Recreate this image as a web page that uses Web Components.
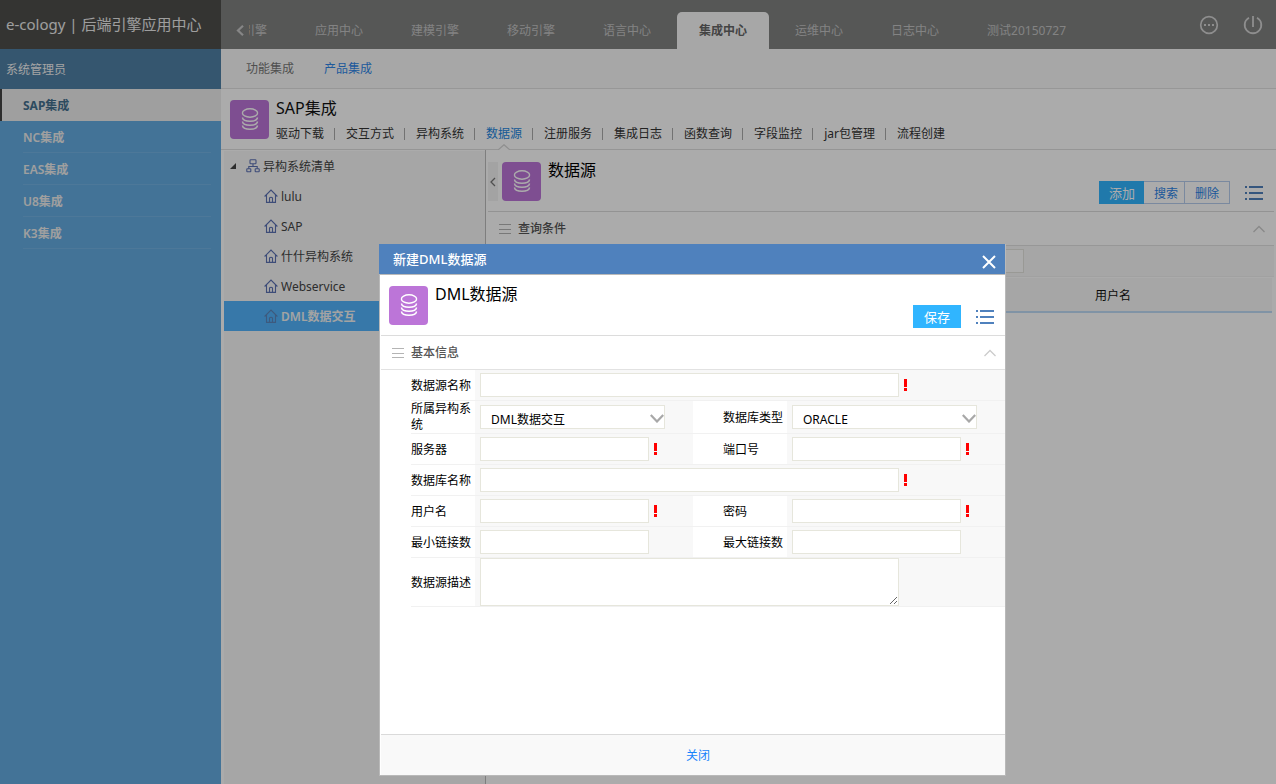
<!DOCTYPE html>
<html lang="zh-CN">
<head>
<meta charset="utf-8">
<title>e-cology | 后端引擎应用中心</title>
<style>
html,body{margin:0;height:100%}
body{font:12px/16px "Noto Sans","Noto Sans CJK SC",sans-serif;color:#222;background:#fff;overflow:hidden}
</style>
</head>
<body>
<engine-app></engine-app>
<script>
const ICONS={
  db:[39,39,'<rect width="39" height="39" rx="4" fill="#bc75d8"/><g fill="none" stroke="#fff" stroke-width="1.4"><ellipse cx="20" cy="13" rx="7.6" ry="4.2"/><path d="M12.4 17.5c1 5 14.200 5 15.200 0M12.400 21.500c1 5 14.200 5 15.200 0M12.400 25.500c1 5 14.200 5 15.200 0"/></g>'],
  list:[18,16,'<g fill="#4f81bd"><path d="M0 1h2v2H0zM4 1h14v2H4zM0 7h2v2H0zM4 7h14v2H4zM0 13h2v2H0zM4 13h14v2H4z"/></g>'],
  lines:[12,10,'<path d="M0 .5h12M0 5.500h12M0 9.500h12" stroke="#b4b4b4"/>'],
  up:[12,8,'<path d="M.5 7L6 1.500L11.500 7" fill="none" stroke="#ccc" stroke-width="1.300"/>'],
  back:[8,11,'<path d="M7 .8L2 5.500L7 10.200" fill="none" stroke="#c8c8c8" stroke-width="2.200"/>'],
  fold:[6,10,'<path d="M5 1L1 5L5 9" fill="none" stroke="#777" stroke-width="1.300"/>'],
  more:[20,20,'<circle cx="10" cy="10" r="8.300" fill="none" stroke="#d4d4d4" stroke-width="1.700"/><path d="M5 9h2v2H5zM9 9h2v2H9zM13 9h2v2h-2z" fill="#d4d4d4"/>'],
  power:[20,20,'<path d="M6 2.700a8.300 8.300 0 1 0 8 0M10 1v11" fill="none" stroke="#d4d4d4" stroke-width="1.800"/>'],
  house:[14,14,'<path d="M.6 7.500L7 1l6.400 6.500M2.500 6v7.400h9V6M5.500 13.400V9q1.500-1.500 3 0v4.400" fill="none" stroke="currentColor" stroke-width="1.100"/>'],
  org:[14,14,'<g fill="none" stroke="currentColor" stroke-width="1.100"><rect x="4" y=".8" width="6" height="4" rx=".8"/><rect x=".8" y="9.800" width="4" height="3" rx=".5"/><rect x="9.200" y="9.800" width="4" height="3" rx=".5"/><path d="M7 5v2.500M2.800 9.800V7.500h8.400v2.300"/></g>'],
  twist:[6,6,'<path d="M6 0v6H0z" fill="#444"/>'],
  close:[14,14,'<path d="M1 1l12 12M13 1L1 13" stroke="#fff" stroke-width="2"/>'],
  down:[14,9,'<path d="M.8 1L7 7.500L13.200 1" fill="none" stroke="#a8a8a8" stroke-width="2.200"/>'],
  need:[4,12,'<path d="M0 0h3v8H0zM0 9h3v3H0z" fill="#f00"/>'],
  peak:[12,6,'<path d="M0 6L6 .7L12 6" fill="#fff" stroke="#d6d6d6" stroke-width="1.200"/>']
};
class Base extends HTMLElement{
  connectedCallback(){
    if(this.shadowRoot)return;
    const t=document.createElement('template');
    t.innerHTML=`<style>*{box-sizing:border-box}button,a{font:inherit;color:inherit;text-decoration:none}button{padding:0;border:0;background:none;display:inline-flex;align-items:center;justify-content:center}h1,h2,h3{margin:0;font-weight:400}${this.css()}</style>${this.html()}`;
    this.attachShadow({mode:'open'}).append(t.content.cloneNode(true));
  }
  attr(n){return this.getAttribute(n)||''}
}
const def=(n,css,html)=>customElements.define(n,class extends Base{css(){return typeof css==='function'?css(this):css}html(){return typeof html==='function'?html(this):html}});

def('app-icon',':host{display:inline-flex;flex:none}svg{display:block}',e=>{const[w,h,m]=ICONS[e.attr('name')];return `<svg width="${w}" height="${h}" viewBox="0 0 ${w} ${h}" aria-hidden="true">${m}</svg>`});

def('side-bar',`
:host{display:flex;flex-direction:column;background:#64ace1;color:#eee}
h1{height:49px;line-height:49px;padding-left:6px;background:#4e4e4b;font-size:15px;color:#ececec;white-space:nowrap}
.user{height:40px;line-height:42px;padding-left:6px;background:#4f80a6;color:#f4f4f4}
a{display:block;height:32px;margin:0 10px 0 23px;line-height:34px;font-weight:600;border-bottom:1px solid #74b4e4}
a.on{margin:0;padding-left:21px;background:#eee;color:#44718f;border-left:2px solid #444;border-bottom:0;font-weight:700}`,
`<h1>e-cology | 后端引擎应用中心</h1><div class="user">系统管理员</div><nav><a class="on" href="#">SAP集成</a><a href="#">NC集成</a><a href="#">EAS集成</a><a href="#">U8集成</a><a href="#">K3集成</a></nav>`);

def('top-bar',`
:host{display:flex;height:49px;background:#808281;color:#c4c4c4}
.back{width:28px;margin-top:12px;padding-left:9px}
nav{display:flex;gap:4px;flex:1;align-items:flex-end;overflow:hidden}
a{height:37px;line-height:37px;padding:0 22px;white-space:nowrap;border-radius:5px 5px 0 0}
a.cut{width:40px;padding-left:0}a.cut span{display:flex;justify-content:flex-end;overflow:hidden}
a.on{background:#fafafa;color:#666;font-weight:600}
.tools{display:flex;gap:24px;padding-right:13px}`,
`<button class="back" aria-label="向前"><app-icon name="back"></app-icon></button>
<nav><a class="cut" href="#"><span>引擎</span></a><a href="#">应用中心</a><a href="#">建模引擎</a><a href="#">移动引擎</a><a href="#">语言中心</a><a class="on" href="#">集成中心</a><a href="#">运维中心</a><a href="#">日志中心</a><a href="#">测试20150727</a></nav>
<div class="tools"><button aria-label="更多"><app-icon name="more"></app-icon></button><button aria-label="退出"><app-icon name="power"></app-icon></button></div>`);

def('sub-nav',`:host{display:flex;gap:30px;height:40px;padding-left:25px;line-height:40px;background:#fafafa;border-bottom:1px solid #e2e2e2;color:#777}a.on{color:#2f86e8}`,
`<a href="#">功能集成</a><a class="on" href="#">产品集成</a>`);

def('product-head',`
:host{display:flex;gap:7px;height:61px;padding:11px 0 0 9px;border-bottom:1px solid #dedede;background:#fff}
h2{font-size:16px;line-height:16px;color:#111}
nav{display:flex;margin-top:10px;line-height:16px}
a{position:relative;white-space:nowrap;color:#333}
a+a{margin-left:10px;padding-left:12px}
a+a::before{content:"";position:absolute;left:0;top:2px;height:12px;border-left:1px solid #aaa}
a.on{color:#2386e0}
a.on app-icon{position:absolute;left:24px;top:18px}`,
`<app-icon name="db"></app-icon><div><h2>SAP集成</h2><nav><a href="#">驱动下载</a><a href="#">交互方式</a><a href="#">异构系统</a><a class="on" href="#">数据源<app-icon name="peak"></app-icon></a><a href="#">注册服务</a><a href="#">集成日志</a><a href="#">函数查询</a><a href="#">字段监控</a><a href="#">jar包管理</a><a href="#">流程创建</a></nav></div>`);

def('system-tree',`
:host{display:block;width:265px;padding:1px 0 0 3px;border-right:1px solid #bcbcbc;background:#fff}
ul{margin:0;padding:0;list-style:none;height:100%;background:#f8f8f8}
li{display:flex;align-items:center;height:30px;padding-left:40px}
li.root{padding-left:6px}li.root a{margin-left:10px}
a{display:flex;align-items:center;gap:3px;padding-top:2px;color:#444}
app-icon{color:#5c72b4}a app-icon{margin-bottom:2px}
.on{background:#52b4fc}.on a{color:#f4f4f4;font-weight:600}.on app-icon{color:#5c86bc}`,
`<ul><li class="root"><app-icon name="twist"></app-icon><a href="#"><app-icon name="org"></app-icon>异构系统清单</a></li>
${['lulu','SAP','什什异构系统','Webservice','DML数据交互'].map((t,i)=>`<li${i==4?' class="on"':''}><a href="#"><app-icon name="house"></app-icon>${t}</a></li>`).join('')}</ul>`);

def('page-head',`
:host{display:flex;height:61px;border-bottom:1px solid #dcdcdc}
h2{flex:1;margin:11px 0 0 7px;font-size:16px;line-height:16px;color:#000}
app-icon[name=db]{margin-top:11px}
.act{display:flex;align-items:center;align-self:flex-start;height:23px;margin-top:30px;padding-right:11px}
app-icon[name=list]{margin-left:15px}`,
e=>`<slot name="lead"></slot><app-icon name="db"></app-icon><h2>${e.attr('heading')}</h2><div class="act"><slot></slot><button aria-label="菜单"><app-icon name="list"></app-icon></button></div>`);

def('act-button',`:host{display:block}button{height:23px;padding:2px 10px 0;border:1px solid #b7cdee;color:#2b83e6;white-space:nowrap}
:host([joined]) button{border-left-width:0}
:host([tight]) button{padding:2px 6px 0 10px}
:host([main]) button{border:0;padding:0 9px 0 10px;background:#30b5ff;color:#fff;font-size:13px}
:host([wide]) button{padding:0 11px}`,`<button type="button"><slot></slot></button>`);

def('section-bar',`:host{display:flex;align-items:center;height:34px;border-bottom:1px solid #e2e2e2;padding:0 9px 0 11px}
h3{flex:1;margin-left:7px;font-size:12px;font-weight:500;color:#555}`,
`<app-icon name="lines"></app-icon><h3><slot></slot></h3><button aria-label="收起"><app-icon name="up"></app-icon></button>`);

def('source-panel',`
:host{display:block;flex:1;min-width:0;padding:1px 2px 0 2px}
.fold{width:10px;height:39px;margin:11px 4px 0 0;background:#f4f4f4}
.query{display:flex;height:31px;align-items:center;background:#f8f8f8;border-bottom:1px solid #f0f0f0}
input{width:419px;height:24px;margin-left:117px;border:1px solid #e4e4de;background:#fff}
.wrap{padding:1px 2px 0 0}
table{width:100%;border-collapse:collapse;table-layout:fixed;background:#f8f8f8}
th{height:34px;padding:2px 0 0;border-bottom:2px solid #bfdcf6;text-align:left;font-weight:400;color:#111}
th:first-child{width:607px}`,
`<page-head heading="数据源"><button slot="lead" class="fold" aria-label="折叠"><app-icon name="fold"></app-icon></button><act-button main>添加</act-button><act-button joined tight>搜索</act-button><act-button joined>删除</act-button></page-head>
<section-bar>查询条件</section-bar><div class="query"><input aria-label="查询条件"></div><div class="wrap"><table><thead><tr><th></th><th>用户名</th></tr></thead></table></div>`);

def('form-field',`
:host{display:grid;grid-template-columns:94px 1fr;min-height:31px;--w:calc(80% - 1px)}
:host([kind=select]){--w:87%;min-height:33px}
.name{display:flex;align-items:center;margin-left:30px;border-bottom:1px solid #f1f1f1;color:#000}
:host(:not([kind=select])) .name,:host([second]) .name{padding-top:2px}
:host([second]) .name{margin:0;padding-left:30px}
.cell{position:relative;display:flex;align-items:center;padding-left:5px;background:#f8f8f8;border-bottom:1px solid #f1f1f1}
.box{position:relative;display:flex;width:var(--w)}
input,select,textarea{width:100%;height:24px;margin:0;padding:0 10px;border:1px solid #e6e6dc;border-radius:0;background:#fff;font:inherit;color:#000;outline:0}
select{appearance:none;padding:5px 10px 0}
textarea{height:48px;display:block}
.box app-icon{position:absolute;right:1px;top:9px;pointer-events:none}
.cell>app-icon{margin-left:5px}`,
e=>{const k=e.attr('kind');return `<label class="name" for="f">${e.attr('label')}</label><div class="cell"><div class="box">${k=='select'?`<select id="f"><option>${e.attr('value')}</option></select><app-icon name="down"></app-icon>`:k=='area'?'<textarea id="f"></textarea>':`<input id="f" type="${k||'text'}">`}</div>${e.hasAttribute('need')?'<app-icon name="need"></app-icon>':''}</div>`});

def('source-form',`form{display:grid;grid-template-columns:1fr 1fr}form-field[wide]{grid-column:1/-1}`,
`<form><form-field wide need label="数据源名称"></form-field>
<form-field kind="select" label="所属异构系统" value="DML数据交互"></form-field><form-field second kind="select" label="数据库类型" value="ORACLE"></form-field>
<form-field need label="服务器"></form-field><form-field second need label="端口号"></form-field>
<form-field wide need label="数据库名称"></form-field>
<form-field need label="用户名"></form-field><form-field second need kind="password" label="密码"></form-field>
<form-field label="最小链接数"></form-field><form-field second label="最大链接数"></form-field>
<form-field wide kind="area" label="数据源描述"></form-field></form>`);

def('source-dialog',`
:host{position:fixed;inset:0;background:rgba(0,0,0,.33)}
section{position:absolute;inset:244px 270px 8px 379px;display:flex;flex-direction:column;background:#fff;border:1px solid #b9b9b9;border-top:0}
header{display:flex;justify-content:space-between;height:31px;margin:0 0 0 -1px;padding:0 9px 0 14px;background:#4f81bd;border-bottom:1px solid #b9b9b9;color:#fff}
header h2{font-size:13px;font-weight:500;line-height:30px}
header button{padding-top:5px}
.body{flex:1;padding-left:1px}
page-head{padding-left:8px}
footer{display:flex;align-items:center;justify-content:center;height:41px;margin-left:1px;padding:2px 0 0 10px;border-top:1px solid #dadada;background:#f9f9f9;color:#1684fb}`,
`<section role="dialog" aria-label="新建DML数据源"><header><h2>新建DML数据源</h2><button aria-label="关闭窗口"><app-icon name="close"></app-icon></button></header>
<div class="body"><page-head heading="DML数据源"><act-button main wide>保存</act-button></page-head><section-bar>基本信息</section-bar><source-form></source-form></div>
<footer><button>关闭</button></footer></section>`);

def('engine-app',`
:host{display:grid;grid-template-columns:221px 1fr;height:100vh;min-height:400px}
main{display:flex;flex-direction:column;min-width:0}
.under{display:flex;flex-direction:column;flex:1}
.work{display:flex;flex:1}`,
`<side-bar></side-bar><main><top-bar></top-bar><sub-nav></sub-nav><div class="under"><product-head></product-head><div class="work"><system-tree></system-tree><source-panel></source-panel></div></div></main><source-dialog></source-dialog>`);
</script>
</body>
</html>
